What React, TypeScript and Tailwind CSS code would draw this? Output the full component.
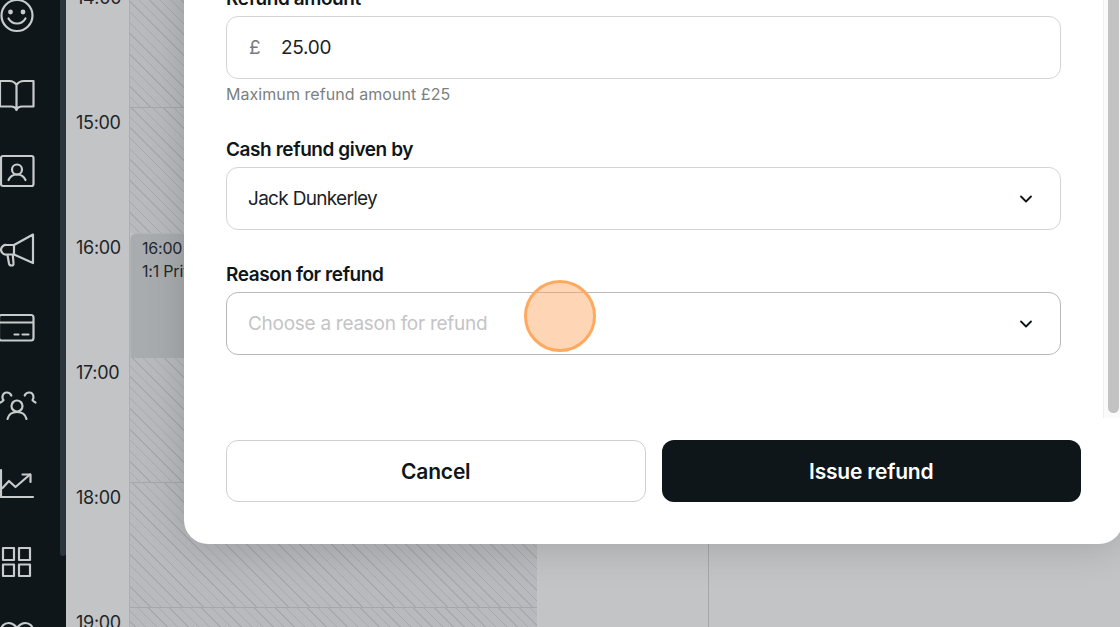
import { ChevronDown } from 'lucide-react'
import type { ReactNode } from 'react'

const font = "font-['Inter','Noto_Sans',sans-serif]"
const hatch =
  'bg-[#b9babd] bg-[repeating-linear-gradient(45deg,transparent_0,transparent_6.500px,#a8a9ad_6.500px,#a8a9ad_7.500px)]'

function NavIcon({ children }: { children: ReactNode }) {
  return (
    <div className="flex h-[78px] shrink-0 items-center">
      <svg
        width="38"
        height="36"
        viewBox="0 0 38 36"
        fill="none"
        stroke="#c8cbcb"
        strokeWidth="2.2"
        strokeLinecap="round"
        strokeLinejoin="round"
      >
        {children}
      </svg>
    </div>
  )
}

function Sidebar() {
  return (
    <div className="flex w-[66px] shrink-0 bg-[#0e161a]">
      <div className="-mt-[24px] flex w-[60px] flex-col">
        <NavIcon>
          <circle cx="17" cy="18.5" r="15.5" />
          <circle cx="10.5" cy="15" r="1.3" fill="#c8cbcb" />
          <circle cx="23" cy="15" r="1.3" fill="#c8cbcb" />
          <path d="M8.5 21.5c2 3.5 5 5 8.500 5s6.500-1.500 8.500-5" />
        </NavIcon>
        <NavIcon>
          <path d="M16.500 32V10c-1.500-2.500-4-4-7-4H0v25.500h11c2.500 0 4.500 1 5.500 3.500 1-2.500 3-3.500 5.500-3.500h11.500V6H24c-3 0-6 1.500-7.500 4" />
        </NavIcon>
        <NavIcon>
          <rect x="1" y="3" width="32.500" height="30" rx="2" />
          <circle cx="17" cy="16.500" r="5" />
          <path d="M8.500 27c1.500-3.500 4.500-5.500 8.500-5.500s7 2 8.500 5.500" />
        </NavIcon>
        <NavIcon>
          <path d="M33 3.500 14 14H6.500a5 5 0 0 0-5.500 4.500A5 5 0 0 0 6.500 23.500H14L33 32Z" />
          <path d="M14 14v9.500" />
          <path d="m7.500 24 1.500 8.500c.3 1.500 1 2 2.500 2s2.300-.8 2-2.300L12.800 24" />
        </NavIcon>
        <NavIcon>
          <rect x="-1" y="6" width="34.500" height="25.500" rx="2.500" />
          <path d="M0 13.500h33" />
          <path d="M14.500 25.500h4M22.500 25.500h6" />
        </NavIcon>
        <NavIcon>
          <circle cx="17" cy="19" r="5.500" />
          <path d="M7.500 32c1-4.500 4.500-7 9.500-7s8.500 2.500 9.500 7" />
          <path d="M0.500 15.500c1.500-.800 2.500-1.500 3-2.300-2-2.500-1-7.500 3-7.700 2.500-.1 4 1 4.800 3" />
          <path d="M35.500 15.500c-1.500-.800-2.500-1.500-3-2.300 2-2.500 1-7.500-3-7.700-2.500-.1-4 1-4.800 3" />
        </NavIcon>
        <NavIcon>
          <path d="M1 5v27h32" />
          <path d="m2.500 23 6.500-7 6.500 6L30 9.500" />
          <path d="M22.500 9.500H30.500V17" />
        </NavIcon>
        <NavIcon>
          <rect x="3" y="5" width="11" height="12" />
          <rect x="19" y="5" width="11" height="12" />
          <rect x="3" y="21.500" width="11" height="11.500" />
          <rect x="19" y="21.500" width="11" height="11.500" />
        </NavIcon>
        <NavIcon>
          <path d="M17 7C14.500 3.500 11.500 2 8.500 2 4 2 1 5.500 1 10c0 8 9 15 16 21 7-6 16-13 16-21 0-4.500-3-8-7.500-8-3 0-6 1.500-8.500 5Z" />
        </NavIcon>
      </div>
      <div className="h-[556px] w-[6px] rounded-b-[3px] bg-[#2a343c]" />
    </div>
  )
}

function TimeColumn() {
  const hours = ['14:00', '15:00', '16:00', '17:00', '18:00', '19:00']
  return (
    <div className="-mt-[18px] flex h-[660px] w-[64px] shrink-0 flex-col self-start border-r border-[#adaeb1] bg-[#c3c4c6]">
      {hours.map(h => (
        <div key={h} className="h-[125px] shrink-0">
          <div className="pl-[10px] pt-[4px] text-[18px] leading-[24px] tracking-[-0.3px] text-[#1d2428]">{h}</div>
        </div>
      ))}
    </div>
  )
}

function HatchColumn() {
  return (
    <div className="-mt-[18px] flex h-[660px] w-[407px] shrink-0 flex-col self-start">
      <div className={`h-[126px] shrink-0 border-b border-[#a6a7aa] ${hatch}`} />
      <div className={`h-[125px] shrink-0 ${hatch}`} />
      <div className="h-[125px] shrink-0 rounded-tl-[6px] border-l border-t border-[#b4b5b8] bg-[#a9acaf] pl-[11px] pt-[3px] text-[16px] leading-[23px] tracking-[-0.2px] text-[#23292d]">
        <div>16:00</div>
        <div>1:1 Private</div>
      </div>
      <div className={`h-[125px] shrink-0 border-b border-[#a6a7aa] ${hatch}`} />
      <div className={`h-[125px] shrink-0 border-b border-[#a6a7aa] ${hatch}`} />
      <div className={`h-[34px] shrink-0 ${hatch}`} />
    </div>
  )
}

function Field({ label, children }: { label: string; children: ReactNode }) {
  return (
    <div>
      <div className="pt-[1px] text-[19px] font-semibold leading-[24px] tracking-[-0.42px] text-[#0e161a]">{label}</div>
      {children}
    </div>
  )
}

function SelectBox({ value, placeholder, dark }: { value: string; placeholder?: boolean; dark?: boolean }) {
  return (
    <div
      className={`mt-[5px] flex h-[63px] items-center justify-between rounded-[12px] border bg-white pl-[21px] pr-[24px] text-[19px] ${
        dark ? 'border-[#b8b8b8]' : 'border-[#d4d4d4]'
      } ${placeholder ? 'tracking-[-0.28px] text-[#c4c4c4]' : 'tracking-[-0.7px] text-[#1a2226]'}`}
    >
      <span className="pt-[1px]">{value}</span>
      <ChevronDown size={20} strokeWidth={2.2} color="#0e161a" />
    </div>
  )
}

function RefundModal() {
  return (
    <div className="absolute left-[184px] right-[-3px] top-[-60px] flex h-[604px] flex-col rounded-[24px] bg-white shadow-[0_4px_40px_rgba(0,0,0,0.16)]">
      <div className="mr-[3px] flex h-[478px] overflow-hidden">
        <div className="flex-1 pl-[42px] pr-[42px] pt-[46px]">
          <Field label="Refund amount">
            <div className="mt-[5px] flex h-[63px] items-center rounded-[12px] border border-[#d4d4d4] bg-white pl-[22px] text-[19px] tracking-[-0.3px] text-[#1a2226]">
              <span className="w-[32px] pt-[1px] text-[#77797b]">£</span>
              <span className="pt-[1px]">25.00</span>
            </div>
          </Field>
          <div className="mt-[3px] h-[24px] text-[16px] leading-[24px] tracking-[0.06px] text-[#7c7f81]">
            Maximum refund amount £25
          </div>
          <div className="mt-[31px]">
            <Field label="Cash refund given by">
              <SelectBox value="Jack Dunkerley" />
            </Field>
          </div>
          <div className="mt-[32px]">
            <Field label="Reason for refund">
              <SelectBox value="Choose a reason for refund" placeholder dark />
            </Field>
          </div>
        </div>
        <div className="w-[17px] shrink-0 border-l border-[#efefef] bg-[#fafafa] pl-[4px] pr-[1px]">
          <div className="h-[473px] rounded-b-[6px] bg-[#c2c2c2]" />
        </div>
      </div>
      <div className="grid grid-cols-2 gap-[16px] px-[42px] pt-[22px]">
        <button className="h-[62px] rounded-[12px] border border-[#d0d0d0] bg-white pt-[1px] text-[21px] font-semibold tracking-[-0.2px] text-[#0e161a]">
          Cancel
        </button>
        <button className="h-[62px] rounded-[12px] bg-[#0e161a] pt-[1px] text-[21px] font-semibold tracking-[-0.2px] text-white">
          Issue refund
        </button>
      </div>
    </div>
  )
}

export default function App() {
  return (
    <div className={`relative flex h-[627px] w-[1120px] overflow-hidden bg-[#c3c4c6] ${font}`}>
      <Sidebar />
      <TimeColumn />
      <HatchColumn />
      <div className="w-[172px] shrink-0 border-r border-[#a6a7aa]" />
      <div className="flex-1" />
      <RefundModal />
      <div className="absolute left-[524px] top-[280px] h-[72px] w-[72px] rounded-full border-[3px] border-[#ffa95e] bg-[#ffa35a]/45" />
    </div>
  )
}
